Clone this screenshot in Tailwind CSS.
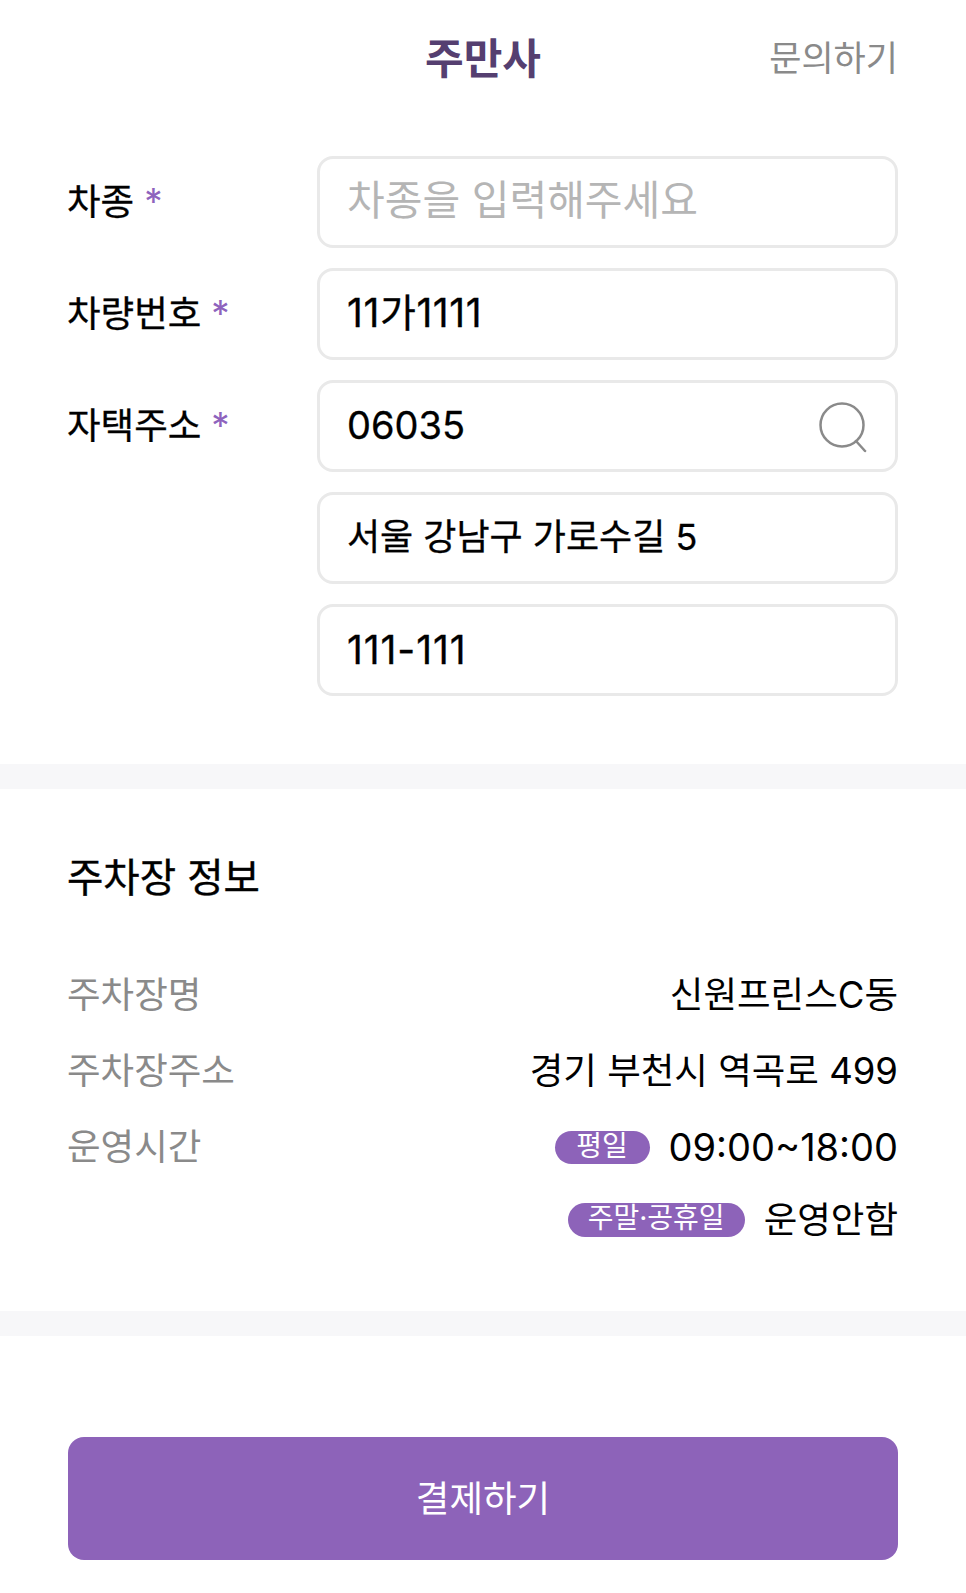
<!DOCTYPE html>
<html lang="ko"><head><meta charset="utf-8">
<script src="https://cdn.jsdelivr.net/npm/@tailwindcss/browser@4"></script>
</head>
<body class="bg-white">
<div class="w-[966px] h-[1593px] overflow-hidden bg-white text-black text-[36.5px] leading-[44px] font-['Inter','Noto_Sans_CJK_KR',sans-serif]">
  <header class="relative h-[156px] pb-[38px] flex items-center justify-center">
    <h1 class="text-[42px] leading-[48px] font-semibold text-[#553f70]">주만사</h1>
    <a class="absolute right-[68px] top-[36px] text-[35px] leading-[44px] text-[#8a8a8a]">문의하기</a>
  </header>
  <section class="px-[67px] h-[608px] flex flex-col gap-[20px]">
    <div class="flex">
      <label class="w-[250px] pt-[24px] flex gap-[10px] [-webkit-text-stroke:0.3px_black]">차종<span class="text-[#8e63bd] [-webkit-text-stroke:0]">*</span></label>
      <input class="w-[581px] h-[92px] rounded-[16px] border-[3px] border-[#e9e9e9] pl-[27px] pr-[28px] pb-[4px] text-[41px] placeholder:text-[#b5b5b5] outline-none" placeholder="차종을 입력해주세요">
    </div>
    <div class="flex">
      <label class="w-[250px] pt-[24px] flex gap-[10px] [-webkit-text-stroke:0.3px_black]">차량번호<span class="text-[#8e63bd] [-webkit-text-stroke:0]">*</span></label>
      <input class="w-[581px] h-[92px] rounded-[16px] border-[3px] border-[#e9e9e9] pl-[27px] pr-[28px] pb-[8px] text-[39px] tracking-[0.6px] [-webkit-text-stroke:0.3px_black] outline-none" value="11가1111">
    </div>
    <div class="flex">
      <label class="w-[250px] pt-[24px] flex gap-[10px] [-webkit-text-stroke:0.3px_black]">자택주소<span class="text-[#8e63bd] [-webkit-text-stroke:0]">*</span></label>
      <div class="relative w-[581px] h-[92px]">
        <input class="w-full h-full rounded-[16px] border-[3px] border-[#e9e9e9] pl-[27px] pr-[28px] pb-[2px] text-[38px] [-webkit-text-stroke:0.3px_black] outline-none" value="06035">
        <svg class="absolute right-[28px] top-[21px] w-[52px] h-[52px]" viewBox="0 0 52 52" fill="none" stroke="#8a8a8a" stroke-width="2.5"><circle cx="24" cy="24" r="21.5"/><path d="M38 40l9 10" stroke-linecap="round"/></svg>
      </div>
    </div>
    <div class="flex pl-[250px]">
      <input class="w-[581px] h-[92px] rounded-[16px] border-[3px] border-[#e9e9e9] pl-[27px] pr-[28px] pb-[8px] text-[36px] outline-none [-webkit-text-stroke:0.3px_black]" value="서울 강남구 가로수길 5">
    </div>
    <div class="flex pl-[250px]">
      <input class="w-[581px] h-[92px] rounded-[16px] border-[3px] border-[#e9e9e9] pl-[27px] pr-[28px] pb-[2px] text-[39px] tracking-[0.9px] [-webkit-text-stroke:0.3px_black] outline-none" value="111-111">
    </div>
  </section>
  <div class="h-[25px] bg-[#f7f7f9]"></div>
  <section class="px-[67px] h-[522px] pt-[63px]">
    <h2 class="text-[39.5px] leading-[52px] [-webkit-text-stroke:0.4px_black]">주차장 정보</h2>
    <dl class="mt-[69px] flex flex-col">
      <div class="flex justify-between h-[76px] pr-[1px]"><dt class="text-[#8a8a8a]">주차장명</dt><dd>신원프린스C동</dd></div>
      <div class="flex justify-between h-[76px] pr-[1px]"><dt class="text-[#8a8a8a]">주차장주소</dt><dd>경기 부천시 역곡로 499</dd></div>
      <div class="flex justify-between h-[73px] pr-[1px]"><dt class="text-[#8a8a8a]">운영시간</dt>
        <dd class="flex items-center h-[44px] gap-[19px] text-[38px]"><span class="h-[33px] w-[95px] rounded-full bg-[#8d63b9] text-white text-[28px] leading-[30px] text-center">평일</span>09:00~18:00</dd></div>
      <div class="flex justify-end pr-[1px]"><dd class="flex items-center h-[44px] gap-[19px]"><span class="h-[34px] w-[177px] rounded-full bg-[#8d63b9] text-white text-[28px] leading-[30px] text-center">주말·공휴일</span>운영안함</dd></div>
    </dl>
  </section>
  <div class="h-[25px] bg-[#f7f7f9]"></div>
  <div class="px-[68px] pt-[101px]">
    <button class="w-[830px] h-[123px] rounded-[16px] bg-[#8d63b9] text-white">결제하기</button>
  </div>
</div>
</body></html>
